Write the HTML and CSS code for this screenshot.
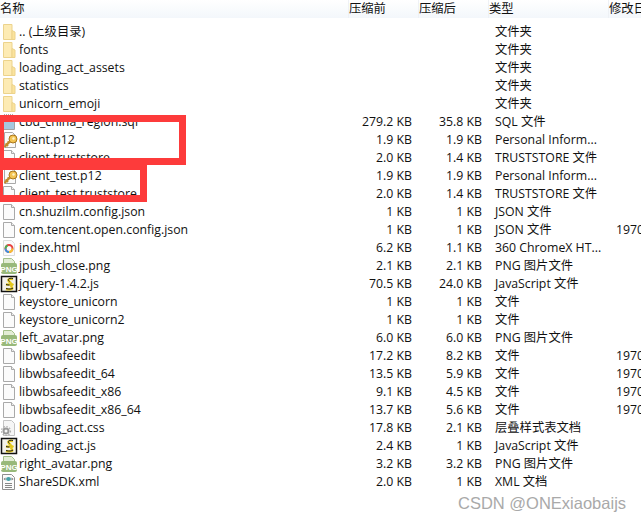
FILE: index.html
```html
<!DOCTYPE html>
<html lang="zh-CN">
<head>
    <meta charset="UTF-8">
    <title>client.p12</title>
    <link rel="stylesheet" href="styles.css">
</head>
<body>
    <svg class="defs" width="0" height="0">
        <symbol id="i-folder" viewBox="0 0 18 18">
            <path d="M3.500 1.500h8.500v15h-8.500z" fill="#fdebb4" stroke="#ecd38c"/>
            <path d="M12 7.500l3 1.500v7.500h-3z" fill="#fbe39c" stroke="#ecd38c"/>
        </symbol>
        <symbol id="i-file" viewBox="0 0 18 18">
            <path d="M3.500 1.500h8l3 3v12h-11z" fill="#fbfbfb" stroke="#a9a9a9"/>
            <path d="M11.500 1.500v3h3" fill="#eee" stroke="#a9a9a9"/>
        </symbol>
        <symbol id="i-sql" viewBox="0 0 18 18">
            <path d="M4 1.500h10" stroke="#aaa" stroke-dasharray="1 1" fill="none"/>
            <path d="M3.500 3.500h11v13h-11z" fill="#fff" stroke="#a4a4a4"/>
            <path d="M4 8h10v8h-10z" fill="#a6c8de"/>
        </symbol>
        <symbol id="i-key" viewBox="0 0 18 18">
            <path d="M4.500 1.500h8l3 3v12h-11z" fill="#fbfbfb" stroke="#a9a9a9"/>
            <circle cx="13" cy="8" r="4" fill="#f3c453" stroke="#a8761f"/>
            <circle cx="13.500" cy="7.500" r="1.200" fill="#fff3c8"/>
            <path d="M10 10.500l-5.500 5.500M5.500 12.500l2.500 2.500M7.500 10.500l2 2" fill="none" stroke="#c08a2a" stroke-width="2"/>
        </symbol>
        <symbol id="i-360" viewBox="0 0 18 18">
            <path d="M3.500 1.500h8l3 3v12h-11z" fill="#fbfbfb" stroke="#dcdcdc"/>
            <circle cx="9" cy="9.500" r="3.500" fill="none" stroke="#e8433f" stroke-width="2"/>
            <path d="M9 13a3.500 3.500 0 0 1-3.500-3.500" fill="none" stroke="#3b8fe0" stroke-width="2"/>
            <path d="M12.500 9.500a3.500 3.500 0 0 1-3.500 3.500" fill="none" stroke="#f5c02f" stroke-width="2"/>
            <path d="M5.500 9.500a3.500 3.500 0 0 1 2-3.200" fill="none" stroke="#43b556" stroke-width="2"/>
        </symbol>
        <symbol id="i-png" viewBox="0 0 18 18">
            <path d="M3.500 1.500h8l3 3v3h-11z" fill="#e3edd6" stroke="#a3bf88"/>
            <rect x="1" y="6" width="16" height="11" rx="2" fill="#98b97a"/>
        </symbol>
        <symbol id="i-js" viewBox="0 0 18 18">
            <rect x="1.500" y="1.500" width="15" height="15" fill="#f4f2ea" stroke="#111" stroke-width="1.500"/>
            <path d="M13 4c-4-1-6 1-3.500 3s2 3-3.500 2.500M13.500 9c-2 1-3 2-1.500 3.500s-2 2.500-6 1.500" fill="none" stroke="#e4c81c" stroke-width="2.400"/>
            <path d="M13 3.500c-4-1-6 1-3.500 3M9.500 10c-1 0-2 0-3.500-.5M13 13c-1 1-4 1.500-7 .5" fill="none" stroke="#222" stroke-width="1"/>
        </symbol>
        <symbol id="i-css" viewBox="0 0 18 18">
            <path d="M3.500 1.500h8l3 3v12h-11z" fill="#f6f6f6" stroke="#c4c4c4"/>
            <circle cx="6" cy="12" r="2.500" fill="none" stroke="#9a9a9a" stroke-width="2"/>
            <circle cx="6" cy="12" r="4.500" fill="none" stroke="#adadad" stroke-width="1.200" stroke-dasharray="1.500 1.500"/>
        </symbol>
        <symbol id="i-xml" viewBox="0 0 18 18">
            <path d="M2.500 1.500h9l3 3v12h-12z" fill="#fbfbfb" stroke="#8f8f8f"/>
            <ellipse cx="8.500" cy="6" rx="2.500" ry="2" fill="#46a0a8"/>
            <path d="M3.500 6l2-1.500v3zM13.500 6l-2-1.500v3z" fill="#777"/>
            <path d="M5 10.500h7M5 12.500h7M5 14.500h7" stroke="#888"/>
        </symbol>
    </svg>

    <div class="head">
        <span class="head-name">名称</span>
        <span class="head-col">压缩前</span>
        <span class="head-col">压缩后</span>
        <span class="head-col">类型</span>
        <span class="head-col">修改日</span>
    </div>

    <div class="list">
        <div class="row"><svg class="icon"><use href="#i-folder"/></svg><span>.. (上级目录)</span><span class="num"></span><span class="num"></span><span class="type">文件夹</span><span></span></div>
        <div class="row"><svg class="icon"><use href="#i-folder"/></svg><span>fonts</span><span class="num"></span><span class="num"></span><span class="type">文件夹</span><span></span></div>
        <div class="row"><svg class="icon"><use href="#i-folder"/></svg><span>loading_act_assets</span><span class="num"></span><span class="num"></span><span class="type">文件夹</span><span></span></div>
        <div class="row"><svg class="icon"><use href="#i-folder"/></svg><span>statistics</span><span class="num"></span><span class="num"></span><span class="type">文件夹</span><span></span></div>
        <div class="row"><svg class="icon"><use href="#i-folder"/></svg><span>unicorn_emoji</span><span class="num"></span><span class="num"></span><span class="type">文件夹</span><span></span></div>
        <div class="row"><svg class="icon"><use href="#i-sql"/></svg><span>cbd_china_region.sql</span><span class="num">279.2 KB</span><span class="num">35.8 KB</span><span class="type">SQL 文件</span><span></span></div>
        <div class="row"><svg class="icon"><use href="#i-key"/></svg><span>client.p12</span><span class="num">1.9 KB</span><span class="num">1.9 KB</span><span class="type">Personal Inform...</span><span></span></div>
        <div class="row"><svg class="icon"><use href="#i-file"/></svg><span>client.truststore</span><span class="num">2.0 KB</span><span class="num">1.4 KB</span><span class="type">TRUSTSTORE 文件</span><span></span></div>
        <div class="row"><svg class="icon"><use href="#i-key"/></svg><span>client_test.p12</span><span class="num">1.9 KB</span><span class="num">1.9 KB</span><span class="type">Personal Inform...</span><span></span></div>
        <div class="row"><svg class="icon"><use href="#i-file"/></svg><span>client_test.truststore</span><span class="num">2.0 KB</span><span class="num">1.4 KB</span><span class="type">TRUSTSTORE 文件</span><span></span></div>
        <div class="row"><svg class="icon"><use href="#i-file"/></svg><span>cn.shuzilm.config.json</span><span class="num">1 KB</span><span class="num">1 KB</span><span class="type">JSON 文件</span><span></span></div>
        <div class="row"><svg class="icon"><use href="#i-file"/></svg><span>com.tencent.open.config.json</span><span class="num">1 KB</span><span class="num">1 KB</span><span class="type">JSON 文件</span><span>1970</span></div>
        <div class="row"><svg class="icon"><use href="#i-360"/></svg><span>index.html</span><span class="num">6.2 KB</span><span class="num">1.1 KB</span><span class="type">360 ChromeX HT...</span><span></span></div>
        <div class="row"><svg class="icon"><use href="#i-png"/><text x="9" y="15" class="png-label">PNG</text></svg><span>jpush_close.png</span><span class="num">2.1 KB</span><span class="num">2.1 KB</span><span class="type">PNG 图片文件</span><span></span></div>
        <div class="row"><svg class="icon"><use href="#i-js"/></svg><span>jquery-1.4.2.js</span><span class="num">70.5 KB</span><span class="num">24.0 KB</span><span class="type">JavaScript 文件</span><span></span></div>
        <div class="row"><svg class="icon"><use href="#i-file"/></svg><span>keystore_unicorn</span><span class="num">1 KB</span><span class="num">1 KB</span><span class="type">文件</span><span></span></div>
        <div class="row"><svg class="icon"><use href="#i-file"/></svg><span>keystore_unicorn2</span><span class="num">1 KB</span><span class="num">1 KB</span><span class="type">文件</span><span></span></div>
        <div class="row"><svg class="icon"><use href="#i-png"/><text x="9" y="15" class="png-label">PNG</text></svg><span>left_avatar.png</span><span class="num">6.0 KB</span><span class="num">6.0 KB</span><span class="type">PNG 图片文件</span><span></span></div>
        <div class="row"><svg class="icon"><use href="#i-file"/></svg><span>libwbsafeedit</span><span class="num">17.2 KB</span><span class="num">8.2 KB</span><span class="type">文件</span><span>1970</span></div>
        <div class="row"><svg class="icon"><use href="#i-file"/></svg><span>libwbsafeedit_64</span><span class="num">13.5 KB</span><span class="num">5.9 KB</span><span class="type">文件</span><span>1970</span></div>
        <div class="row"><svg class="icon"><use href="#i-file"/></svg><span>libwbsafeedit_x86</span><span class="num">9.1 KB</span><span class="num">4.5 KB</span><span class="type">文件</span><span>1970</span></div>
        <div class="row"><svg class="icon"><use href="#i-file"/></svg><span>libwbsafeedit_x86_64</span><span class="num">13.7 KB</span><span class="num">5.6 KB</span><span class="type">文件</span><span>1970</span></div>
        <div class="row"><svg class="icon"><use href="#i-css"/></svg><span>loading_act.css</span><span class="num">17.8 KB</span><span class="num">2.1 KB</span><span class="type">层叠样式表文档</span><span></span></div>
        <div class="row"><svg class="icon"><use href="#i-js"/></svg><span>loading_act.js</span><span class="num">2.4 KB</span><span class="num">1 KB</span><span class="type">JavaScript 文件</span><span></span></div>
        <div class="row"><svg class="icon"><use href="#i-png"/><text x="9" y="15" class="png-label">PNG</text></svg><span>right_avatar.png</span><span class="num">3.2 KB</span><span class="num">3.2 KB</span><span class="type">PNG 图片文件</span><span></span></div>
        <div class="row"><svg class="icon"><use href="#i-xml"/></svg><span>ShareSDK.xml</span><span class="num">2.0 KB</span><span class="num">1 KB</span><span class="type">XML 文档</span><span></span></div>
    </div>

    <div class="mark mark-one"></div>
    <div class="mark mark-two"></div>
    <div class="watermark">CSDN @ONExiaobaijs</div>
</body>
</html>
```

FILE: styles.css
```css
html, body {
    margin: 0;
    padding: 0;
    height: 521px;
    overflow: hidden;
    background: #fff;
}
body {
    position: relative;
    font-family: "Open Sans", "Noto Sans CJK SC", sans-serif;
    font-size: 12.3px;
    color: #111;
}
.defs {
    position: absolute;
}
.head {
    display: grid;
    grid-template-columns: 348px 70px 70px 120px 1fr;
    height: 18px;
    line-height: 17px;
    background: linear-gradient(#ffffff, #f3f7fb);
    white-space: nowrap;
    overflow: hidden;
}
.head-col {
    border-left: 1px solid #eef1f5;
}
.list {
    padding-top: 5px;
}
.row {
    display: grid;
    grid-template-columns: 19px 330px 63px 70px 134px 1fr;
    height: 18px;
    line-height: 18px;
    white-space: nowrap;
}
.icon {
    width: 18px;
    height: 18px;
}
.num {
    text-align: right;
}
.type {
    padding-left: 13px;
}
.png-label {
    font-family: "Liberation Sans", sans-serif;
    font-size: 8px;
    font-weight: bold;
    fill: #fff;
    text-anchor: middle;
}
.mark {
    position: absolute;
    left: 0;
    box-sizing: border-box;
    border: 7px solid #fd3b3b;
}
.mark-one {
    top: 115px;
    width: 186px;
    height: 50px;
    border-left-width: 4px;
}
.mark-two {
    top: 165px;
    width: 147px;
    height: 37px;
    border-top-width: 5px;
    border-left-width: 3px;
}
.watermark {
    position: absolute;
    left: 458px;
    top: 493px;
    font-family: "Liberation Sans", sans-serif;
    font-size: 16.500px;
    line-height: 20px;
    color: #a9a9a9;
    text-shadow: 0 0 1px #fff;
    white-space: nowrap;
}
```
